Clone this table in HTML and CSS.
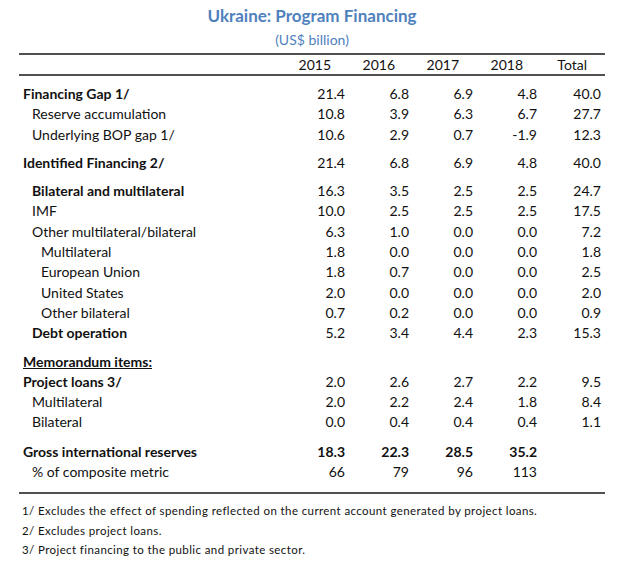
FILE: index.html
```html
<!DOCTYPE html>
<html lang="en">
<head>
<meta charset="utf-8">
<title>Ukraine: Program Financing</title>
<link rel="stylesheet" href="styles.css">
</head>
<body>
<div class="page">
  <header class="heading">
    <h1 class="title">Ukraine: Program Financing</h1>
    <p class="subtitle">(US$ billion)</p>
  </header>
  <div class="table">
    <div class="row head">
      <span class="label"></span>
      <span class="num">2015</span><span class="num">2016</span><span class="num">2017</span><span class="num">2018</span><span class="num">Total</span>
    </div>
    <div class="body">
      <div class="row bold l0"><span class="label">Financing Gap 1/</span><span class="num">21.4</span><span class="num">6.8</span><span class="num">6.9</span><span class="num">4.8</span><span class="num">40.0</span></div>
      <div class="row l1"><span class="label">Reserve accumulation</span><span class="num">10.8</span><span class="num">3.9</span><span class="num">6.3</span><span class="num">6.7</span><span class="num">27.7</span></div>
      <div class="row l1"><span class="label">Underlying BOP gap 1/</span><span class="num">10.6</span><span class="num">2.9</span><span class="num">0.7</span><span class="num">-1.9</span><span class="num">12.3</span></div>

      <div class="row bold l0 gap"><span class="label">Identified Financing 2/</span><span class="num">21.4</span><span class="num">6.8</span><span class="num">6.9</span><span class="num">4.8</span><span class="num">40.0</span></div>

      <div class="row bold l1 gap"><span class="label">Bilateral and multilateral</span><span class="num">16.3</span><span class="num">3.5</span><span class="num">2.5</span><span class="num">2.5</span><span class="num">24.7</span></div>
      <div class="row l1"><span class="label">IMF</span><span class="num">10.0</span><span class="num">2.5</span><span class="num">2.5</span><span class="num">2.5</span><span class="num">17.5</span></div>
      <div class="row l1"><span class="label">Other multilateral/bilateral</span><span class="num">6.3</span><span class="num">1.0</span><span class="num">0.0</span><span class="num">0.0</span><span class="num">7.2</span></div>
      <div class="row l2"><span class="label">Multilateral</span><span class="num">1.8</span><span class="num">0.0</span><span class="num">0.0</span><span class="num">0.0</span><span class="num">1.8</span></div>
      <div class="row l2"><span class="label">European Union</span><span class="num">1.8</span><span class="num">0.7</span><span class="num">0.0</span><span class="num">0.0</span><span class="num">2.5</span></div>
      <div class="row l2"><span class="label">United States</span><span class="num">2.0</span><span class="num">0.0</span><span class="num">0.0</span><span class="num">0.0</span><span class="num">2.0</span></div>
      <div class="row l2"><span class="label">Other bilateral</span><span class="num">0.7</span><span class="num">0.2</span><span class="num">0.0</span><span class="num">0.0</span><span class="num">0.9</span></div>
      <div class="row bold l1"><span class="label">Debt operation</span><span class="num">5.2</span><span class="num">3.4</span><span class="num">4.4</span><span class="num">2.3</span><span class="num">15.3</span></div>

      <div class="row bold l0 gap"><span class="label"><u>Memorandum items:</u></span><span class="num"></span><span class="num"></span><span class="num"></span><span class="num"></span><span class="num"></span></div>
      <div class="row bold l0"><span class="label">Project loans 3/</span><span class="num">2.0</span><span class="num">2.6</span><span class="num">2.7</span><span class="num">2.2</span><span class="num">9.5</span></div>
      <div class="row l1"><span class="label">Multilateral</span><span class="num">2.0</span><span class="num">2.2</span><span class="num">2.4</span><span class="num">1.8</span><span class="num">8.4</span></div>
      <div class="row l1"><span class="label">Bilateral</span><span class="num">0.0</span><span class="num">0.4</span><span class="num">0.4</span><span class="num">0.4</span><span class="num">1.1</span></div>

      <div class="row bold-all l0 gap-lg"><span class="label">Gross international reserves</span><span class="num">18.3</span><span class="num">22.3</span><span class="num">28.5</span><span class="num">35.2</span><span class="num"></span></div>
      <div class="row l1"><span class="label">% of composite metric</span><span class="num">66</span><span class="num">79</span><span class="num">96</span><span class="num">113</span><span class="num"></span></div>
    </div>
  </div>
  <footer class="notes">
    <p class="note">1/ Excludes the effect of spending reflected on the current account generated by project loans.</p>
    <p class="note">2/ Excludes project loans.</p>
    <p class="note">3/ Project financing to the public and private sector.</p>
  </footer>
</div>
</body>
</html>
```

FILE: styles.css
```css
html, body {
  margin: 0;
  padding: 0;
  background: #ffffff;
}

body {
  font-family: "Lato", "Open Sans", "Liberation Sans", sans-serif;
  color: #111111;
}

.page {
  width: 586px;
  padding: 5px 0 0 19px;
}

.heading {
  display: flex;
  flex-direction: column;
  align-items: center;
}

.title {
  margin: 0;
  font-size: 17px;
  line-height: 22px;
  font-weight: 700;
  color: #4f81bd;
}

.subtitle {
  margin: 4px 0 0;
  font-size: 14px;
  line-height: 18px;
  color: #4f81bd;
}

.table {
  margin-top: 4px;
  border-top: 2px solid #505050;
  border-bottom: 2px solid #505050;
  font-size: 14px;
}

.row {
  display: grid;
  grid-template-columns: 262px repeat(5, 64px) 4px;
  height: 20.3px;
  line-height: 20px;
  white-space: nowrap;
}

.row.head {
  height: 19px;
  line-height: 19px;
  border-bottom: 2px solid #505050;
}

.row.head .num {
  padding-right: 14px;
}

.body {
  padding: 8px 0 10px;
}

.num {
  text-align: right;
}

.l0 .label { padding-left: 4px; }
.l1 .label { padding-left: 13px; }
.l2 .label { padding-left: 22px; }

.bold .label { font-weight: 700; }
.bold-all { font-weight: 700; }

.gap { margin-top: 8px; }
.gap-lg { margin-top: 9px; }

.notes {
  padding: 7px 0 0 3px;
}

.note {
  margin: 0;
  font-size: 11.5px;
  line-height: 19.5px;
  letter-spacing: 0.4px;
}
```
